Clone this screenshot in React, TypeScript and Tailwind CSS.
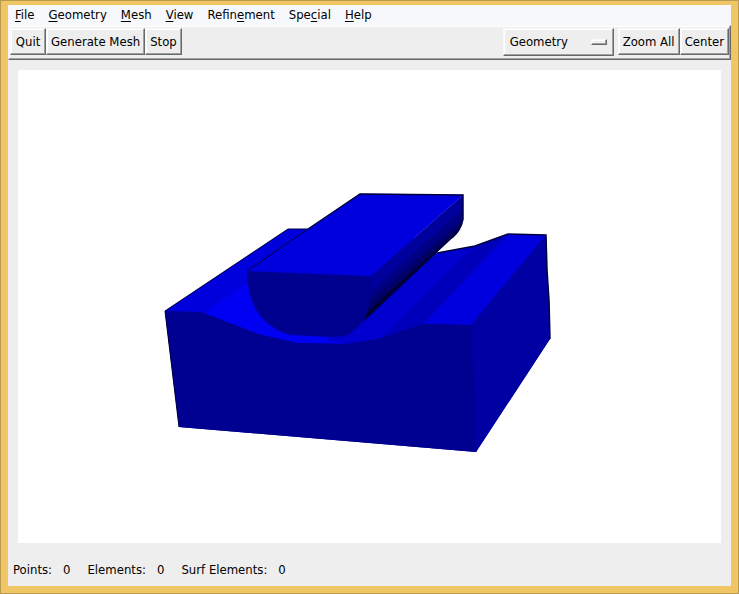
import type { ReactNode } from "react";

const menus = [
  { label: "File", underline: 0 },
  { label: "Geometry", underline: 0 },
  { label: "Mesh", underline: 0 },
  { label: "View", underline: 0 },
  { label: "Refinement", underline: 5 },
  { label: "Special", underline: 3 },
  { label: "Help", underline: 0 },
];

const stats = [
  { label: "Points:", value: 0 },
  { label: "Elements:", value: 0 },
  { label: "Surf Elements:", value: 0 },
];

const raised =
  "border border-t-[#f8f8f8] border-l-[#f8f8f8] border-r-[#696969] border-b-[#696969] shadow-[inset_-1px_-1px_#a0a0a0,inset_1px_1px_#ffffff]";

function MenuBar() {
  return (
    <nav className="flex h-5 items-center bg-[#f7f8fb]">
      {menus.map(({ label, underline }) => (
        <button key={label} type="button" className="px-[7px]">
          {label.slice(0, underline)}
          <span className="underline underline-offset-2">{label[underline]}</span>
          {label.slice(underline + 1)}
        </button>
      ))}
    </nav>
  );
}

function ToolButton({ children }: { children: ReactNode }) {
  return (
    <button type="button" className={`h-[27px] min-w-9 px-1 whitespace-nowrap ${raised}`}>
      {children}
    </button>
  );
}

function ToolBar() {
  return (
    <div className={`flex items-start justify-between px-px pt-0.5 pb-[3px] ${raised}`}>
      <div className="flex">
        <ToolButton>Quit</ToolButton>
        <ToolButton>Generate Mesh</ToolButton>
        <ToolButton>Stop</ToolButton>
      </div>
      <div className="flex">
        <div className={`relative mr-1 h-7 w-[111px] ${raised}`}>
          <select aria-label="View mode" className="h-full w-full appearance-none pl-1.5 outline-none">
            <option>Geometry</option>
            <option>Mesh</option>
          </select>
          <span className={`pointer-events-none absolute top-2.5 right-1.5 h-1.5 w-4 ${raised}`} />
        </div>
        <ToolButton>Zoom All</ToolButton>
        <ToolButton>Center</ToolButton>
      </div>
    </div>
  );
}

function Model() {
  return (
    <svg viewBox="18 70 703 473" className="h-full w-full" role="img" aria-label="Geometry">
      {/* base fill so no white shows between neighbouring faces */}
      <path d="M165 311 288 229H400L437 253 475 246 508 234 546 235 547 270 549 300 550 339 476 452 179 427Z" fill="#000091" />

      <path d="M165 311 288 229H310L247 284 204 314Z" fill="#0000dc" />
      <path d="M204 313 247 283 300 300 372 318 437 253 475 246 382 338 345 344 297 343 258 334Z" fill="#0000f2" />
      <path d="M437 253 475 246 382 338 345 344 325 340 364 321Z" fill="#0000cf" />
      <path d="M475 246 508 234 423 324 382 338Z" fill="#0000bb" />
      <path d="M508 234 546 235 471 325 423 324Z" fill="#0000df" />
      <path d="M546 235 547 270 549 300 550 339 476 452 471 325Z" fill="#0000a3" />
      <path
        d="M165 311 202 312 210 316 235 325 258 334 283 340 297 343 345 344 365 341 382 338 423 324 471 325 476 452 179 427Z"
        fill="#000091"
      />
      <path d="M471 325 476 452" stroke="#000098" />

      <path d="M371 276 463 195V219Q461 230 452 238L437 252 364 321Z" fill="#00009c" />
      <path d="M370 292 463 209V219Q461 230 452 238L364 321Z" fill="#000085" />
      <path d="M369 302 462 220Q460 230 452 238L364 321Z" fill="#000066" />
      <path d="M367 312 459 229 452 238 364 321Z" fill="#000038" />
      <path
        d="M247 271 371 276 370 296Q369 310 363 321 354 333 344 336L333 337 290 335Q274 331 261 317 247 299 247 271Z"
        fill="#00008e"
      />
      <path d="M371 276 370 296Q369 310 363 321" fill="none" stroke="#00008e" />
      <path d="M247 271 360 194 463 195 371 276Z" fill="#0000df" stroke="#0000c8" strokeWidth="0.5" />

      <g fill="none" stroke="#000040">
        <path d="M165 311 288 229H308M247 271 308 229M165 311 179 427" />
        <path d="M308 229 360 194 463 195V219Q461 230 452 238" strokeWidth="1.5" />
        <path d="M437 253 475 246 508 234 546 235 547 270 549 300 550 339" strokeWidth="1.5" />
      </g>
    </svg>
  );
}

export default function App() {
  return (
    <div className="flex h-screen flex-col border-8 border-t-[5px] border-[#f0c664] bg-[#eeeeee] font-['DejaVu_Sans_Condensed','DejaVu_Sans',sans-serif] text-[13px] leading-4 text-black outline outline-[#b99a50] -outline-offset-1">
      <MenuBar />
      <ToolBar />
      <main className="mx-2.5 mt-2.5 min-h-0 flex-1 bg-white">
        <Model />
      </main>
      <footer className="flex h-[43px] items-center gap-[17px] px-[5px] pt-[11px]">
        {stats.map(({ label, value }) => (
          <div key={label} className="flex gap-[11px]">
            <span>{label}</span>
            <span>{value}</span>
          </div>
        ))}
      </footer>
    </div>
  );
}
